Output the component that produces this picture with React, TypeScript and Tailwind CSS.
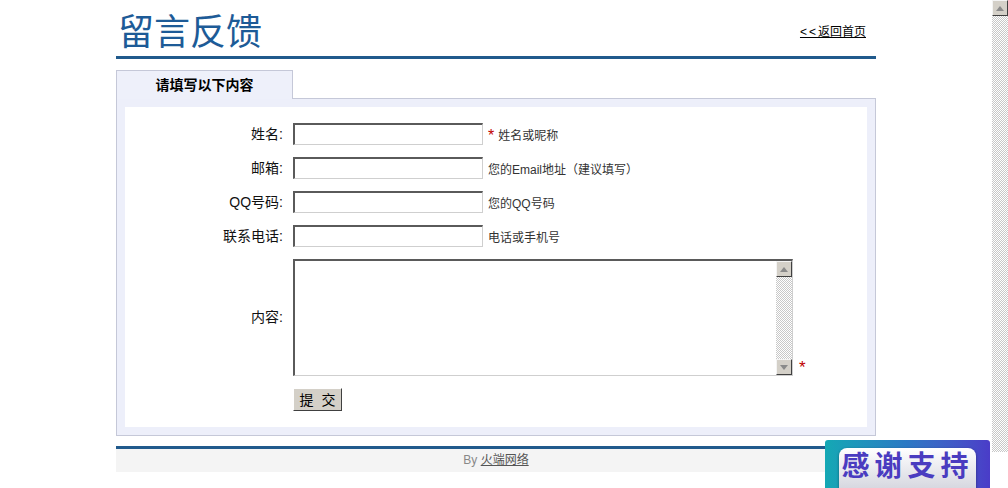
import React from 'react';

const cjk = "font-['Liberation_Sans','Noto_Sans_CJK_SC',sans-serif]";
const checker =
  'bg-[image:repeating-conic-gradient(#c8c8c8_0%_25%,#ffffff_0%_50%)] bg-[length:2px_2px]';

function ArrowButton({ up }: { up?: boolean }) {
  return (
    <div className="flex h-[16px] w-[16px] shrink-0 items-center justify-center border border-t-[#f4f4f4] border-l-[#f4f4f4] border-b-[#404040] border-r-[#404040] bg-[#d4d0c8]">
      <svg width="8" height="5" viewBox="0 0 8 5">
        {up ? <path d="M4 0 L8 5 L0 5 Z" fill="#8a8a8a" /> : <path d="M0 0 L8 0 L4 5 Z" fill="#8a8a8a" />}
      </svg>
    </div>
  );
}

function Field({ label, hint, required }: { label: string; hint: string; required?: boolean }) {
  return (
    <div className="flex h-[22px] items-center">
      <div className="w-[159px] pr-[1px] text-right text-[14px] text-[#111]">{label}:</div>
      <input
        className="ml-[9px] h-[22px] w-[190px] border-t-2 border-l-2 border-b border-r border-t-[#5a5a5a] border-l-[#5a5a5a] border-b-[#cfcfcf] border-r-[#cfcfcf] bg-white px-1 text-[12px] outline-none"
      />
      <div className="ml-[5px] flex items-center self-end text-[12px] leading-[18px] text-[#333]">
        {required && <span className="mr-[4px] text-[16px] leading-[18px] text-[#c00000]">*</span>}
        <span>{hint}</span>
      </div>
    </div>
  );
}

export default function App() {
  return (
    <div className={`relative flex h-[488px] w-full overflow-hidden bg-white ${cjk}`}>
      <div className="flex-1">
        <div className="mx-auto w-[760px]">
          {/* header */}
          <div className="flex h-[56px] items-end justify-between">
            <h1 className="pb-[3px] pl-[2px] text-[36px] font-normal leading-[40px] text-[#1d5b97]">
              留言反馈
            </h1>
            <a href="#" className="pb-[15px] pr-[10px] text-[12px] text-black underline">
              <span className="tracking-[2px]">&lt;&lt;</span>返回首页
            </a>
          </div>
          <div className="h-[3px] bg-[#205a8c]" />

          {/* tab */}
          <div className="relative z-10 mt-[11px] -mb-px flex h-[29px] w-[177px] items-center justify-center border-t border-l border-r border-[#c5c8d8] bg-[#eef0fa] text-[14px] font-bold text-black">
            请填写以下内容
          </div>

          {/* panel */}
          <div className="border border-[#c5c8d8] bg-[#edeffa] p-[8px]">
            <div className="flex h-[320px] flex-col gap-[12px] bg-white pt-[16px]">
              <Field label="姓名" hint="姓名或昵称" required />
              <Field label="邮箱" hint="您的Email地址（建议填写）" />
              <Field label="QQ号码" hint="您的QQ号码" />
              <Field label="联系电话" hint="电话或手机号" />

              <div className="flex h-[117px] items-center">
                <div className="w-[159px] pr-[1px] text-right text-[14px] text-[#111]">内容:</div>
                <div className="ml-[9px] flex h-[117px] w-[500px] border-t-2 border-l-2 border-b border-r border-t-[#5a5a5a] border-l-[#5a5a5a] border-b-[#cfcfcf] border-r-[#cfcfcf] bg-white">
                  <textarea className="flex-1 resize-none p-1 text-[12px] outline-none" />
                  <div className="flex w-[16px] flex-col">
                    <ArrowButton up />
                    <div className={`flex-1 ${checker}`} />
                    <ArrowButton />
                  </div>
                </div>
                <span className="ml-[6px] self-end text-[17px] leading-[16px] text-[#c00000]">*</span>
              </div>

              <div className="flex">
                <button className="ml-[168px] h-[23px] w-[49px] border border-t-[#ffffff] border-l-[#ffffff] border-b-[#404040] border-r-[#404040] bg-[#d4d0c8] text-[14px] leading-[20px] text-black">
                  提&nbsp;&nbsp;交
                </button>
              </div>
            </div>
          </div>

          {/* footer */}
          <div className="mt-[10px] h-[3px] bg-[#205a8c]" />
          <div className="h-[23px] bg-[#f4f4f4] text-center text-[12px] leading-[23px] text-[#888]">
            By{' '}
            <a href="#" className="text-[#555] underline">
              火端网络
            </a>
          </div>
        </div>
      </div>

      {/* page scrollbar */}
      <div className="flex w-[16px] flex-col">
        <ArrowButton up />
        <div className={`h-[436px] ${checker}`} />
        <div className="flex-1 bg-white" />
      </div>

      {/* floating badge */}
      <div className="absolute left-[825px] top-[440px] h-[56px] w-[165px] rounded-t-[3px] bg-gradient-to-r from-[#14a8b4] via-[#2b78c4] to-[#4a3cc8] px-[14px] pt-[8px]">
        <div className="flex h-full items-start justify-center rounded-[8px] bg-gradient-to-b from-[#ffffff] to-[#cfd0da] pt-[2px] shadow-[0_1px_3px_rgba(0,0,0,0.4)]">
          <span className="text-[28px] font-bold leading-[34px] tracking-[5px] text-[#4a3cc0]">感谢支持</span>
        </div>
      </div>
    </div>
  );
}
